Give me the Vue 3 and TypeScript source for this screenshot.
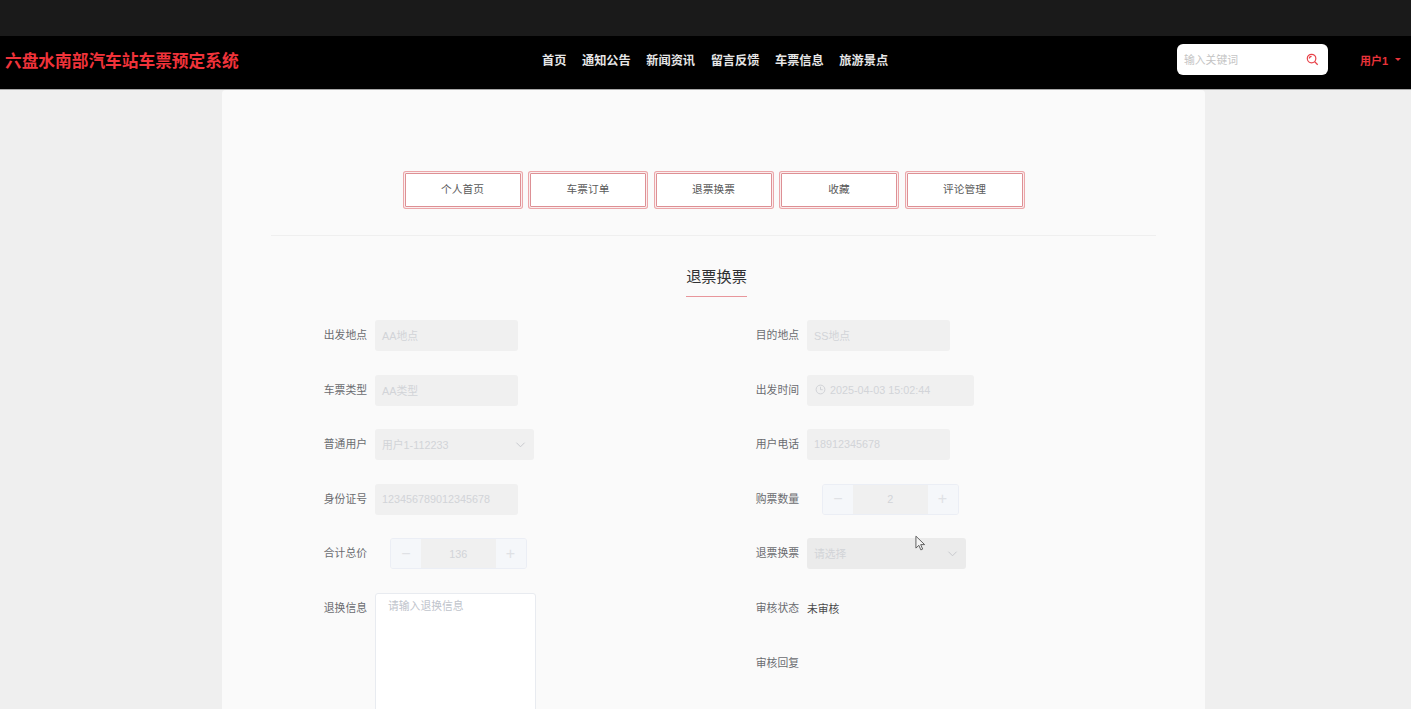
<template>
  <div class="page">
    <div class="top-strip"></div>
    <header class="nav-bar">
      <div class="site-title">六盘水南部汽车站车票预定系统</div>
      <nav class="nav-links">
        <a v-for="item in navItems" :key="item" class="nav-link">{{ item }}</a>
      </nav>
      <div class="search-box">
        <span class="search-placeholder">输入关键词</span>
        <svg class="search-icon" viewBox="0 0 14 14" width="13" height="13">
          <circle cx="6" cy="6" r="4.6" />
          <path d="M3.6 6a2.4 2.4 0 0 1 2.4-2.4" />
          <path d="M9.4 9.4 12.6 12.6" />
        </svg>
      </div>
      <div class="user-menu">
        <span>用户1</span>
        <i class="caret"></i>
      </div>
    </header>

    <main class="content">
      <section class="card">
        <div class="tabs">
          <button v-for="tab in tabs" :key="tab" class="tab-btn">{{ tab }}</button>
        </div>
        <div class="divider"></div>
        <div class="title-wrap">
          <h2 class="form-title">退票换票</h2>
        </div>

        <div class="form-grid">
          <div class="form-col">
            <div class="field">
              <label>出发地点</label>
              <div class="input is-disabled">AA地点</div>
            </div>
            <div class="field">
              <label>车票类型</label>
              <div class="input is-disabled">AA类型</div>
            </div>
            <div class="field">
              <label>普通用户</label>
              <div class="input select is-disabled">
                <span>用户1-112233</span>
                <svg class="chevron" viewBox="0 0 12 12" width="11" height="11"><path d="M1.5 4 6 8.5 10.5 4" /></svg>
              </div>
            </div>
            <div class="field">
              <label>身份证号</label>
              <div class="input is-disabled">123456789012345678</div>
            </div>
            <div class="field">
              <label>合计总价</label>
              <div class="stepper">
                <span class="step-btn">−</span>
                <span class="step-value">136</span>
                <span class="step-btn">+</span>
              </div>
            </div>
            <div class="field field-top">
              <label>退换信息</label>
              <div class="textarea">请输入退换信息</div>
            </div>
          </div>

          <div class="form-col">
            <div class="field">
              <label>目的地点</label>
              <div class="input is-disabled">SS地点</div>
            </div>
            <div class="field">
              <label>出发时间</label>
              <div class="input date is-disabled">
                <svg class="clock" viewBox="0 0 12 12" width="11" height="11">
                  <circle cx="6" cy="6" r="4.8" />
                  <path d="M6 3v3.2h2.4" />
                </svg>
                <span>2025-04-03 15:02:44</span>
              </div>
            </div>
            <div class="field">
              <label>用户电话</label>
              <div class="input is-disabled">18912345678</div>
            </div>
            <div class="field">
              <label>购票数量</label>
              <div class="stepper">
                <span class="step-btn">−</span>
                <span class="step-value">2</span>
                <span class="step-btn">+</span>
              </div>
            </div>
            <div class="field">
              <label>退票换票</label>
              <div class="input select refund is-disabled">
                <span>请选择</span>
                <svg class="chevron" viewBox="0 0 12 12" width="11" height="11"><path d="M1.5 4 6 8.5 10.5 4" /></svg>
              </div>
            </div>
            <div class="field">
              <label>审核状态</label>
              <div class="plain-value">未审核</div>
            </div>
            <div class="field">
              <label>审核回复</label>
            </div>
          </div>
        </div>
      </section>
    </main>

    <svg class="mouse-cursor" viewBox="0 0 12 18" width="11" height="17">
      <path d="M1 1v13l3.2-3 2.2 5 2-.9-2.2-4.900h4.300z" />
    </svg>
  </div>
</template>

<script setup lang="ts">
const navItems: string[] = ['首页', '通知公告', '新闻资讯', '留言反馈', '车票信息', '旅游景点']
const tabs: string[] = ['个人首页', '车票订单', '退票换票', '收藏', '评论管理']
</script>

<style>
html,
body {
  margin: 0;
  height: 100%;
  overflow: hidden;
}
</style>

<style scoped>
.page {
  position: relative;
  height: 709px;
  overflow: hidden;
  background: #efefef;
  font-family: "Liberation Sans", "Noto Sans CJK SC", sans-serif;
  font-size: 10.8px;
  color: #606266;
}

.top-strip {
  height: 36px;
  background: #1a1a1a;
}

.nav-bar {
  display: flex;
  align-items: center;
  height: 54px;
  padding-bottom: 6px;
  box-sizing: border-box;
  background: #000;
  border-bottom: 1px solid #a8a8a8;
}

.site-title {
  width: 542px;
  padding-left: 5px;
  box-sizing: border-box;
  font-size: 16.7px;
  font-weight: 700;
  color: #f0333a;
  white-space: nowrap;
}

.nav-links {
  display: flex;
  gap: 15.6px;
}

.nav-link {
  font-size: 12.2px;
  font-weight: 700;
  color: #e6e6e6;
}

.search-box {
  display: flex;
  align-items: center;
  justify-content: space-between;
  width: 151px;
  height: 31px;
  margin-left: auto;
  padding: 0 9px 0 7px;
  box-sizing: border-box;
  background: #fff;
  border-radius: 6px;
}

.search-placeholder {
  padding-bottom: 1px;
  color: #c4c4c4;
}

.search-icon {
  fill: none;
  stroke: #e8434a;
  stroke-width: 1.3;
}

.user-menu {
  display: flex;
  align-items: center;
  gap: 7px;
  width: 51px;
  margin-left: 32px;
  box-sizing: border-box;
  font-size: 11px;
  font-weight: 700;
  color: #e8333a;
}

.caret {
  width: 0;
  height: 0;
  border-left: 3px solid transparent;
  border-right: 3px solid transparent;
  border-top: 3px solid #e8333a;
}

.content {
  display: flex;
  justify-content: center;
  padding-left: 16px;
}

.card {
  width: 983px;
  height: 619px;
  padding: 81px 49px 0;
  box-sizing: border-box;
  background: #fafafa;
  border-radius: 4px 4px 0 0;
}

.tabs {
  display: flex;
  justify-content: center;
  gap: 9.5px;
}

.tab-btn {
  width: 116px;
  height: 34px;
  margin: 2px 0;
  padding: 0 0 4px;
  background: #fff;
  border: 1px solid #dd9095;
  box-shadow: 0 0 0 1px #fbeeee, 0 0 0 2px #eba6a9;
  border-radius: 1px;
  font-family: inherit;
  font-size: 10.7px;
  color: #5a5a5a;
}

.divider {
  height: 1px;
  margin-top: 26px;
  background: #efefef;
}

.title-wrap {
  display: flex;
  justify-content: center;
  margin-top: 29px;
  padding-left: 6px;
}

.form-title {
  margin: 0;
  padding-bottom: 8px;
  border-bottom: 1px solid #e8969b;
  font-size: 15.2px;
  font-weight: 400;
  line-height: 23px;
  color: #303133;
}

.form-grid {
  display: grid;
  grid-template-columns: 432px 432px;
  margin-top: 23px;
}

.form-col {
  display: flex;
  flex-direction: column;
  gap: 23.6px;
}

.field {
  display: flex;
  align-items: center;
  gap: 8px;
  min-height: 31px;
}

.field-top {
  align-items: flex-start;
}

.field label {
  width: 96px;
  flex-shrink: 0;
  line-height: 31px;
  text-align: right;
  color: #6a6c70;
}

.input {
  display: flex;
  align-items: center;
  width: 143px;
  height: 31px;
  padding: 0 7px 1px;
  box-sizing: border-box;
  border-radius: 3px;
  white-space: nowrap;
}

.is-disabled {
  background: #f0f0f0;
  color: #d2d4d8;
}

.select {
  justify-content: space-between;
  width: 159px;
  padding-right: 8px;
}

.refund {
  background: #ebebeb;
}

.date {
  gap: 4px;
  width: 167px;
  padding-left: 8px;
}

.chevron {
  fill: none;
  stroke: #c4c6ca;
  stroke-width: 1;
}

.clock {
  fill: none;
  stroke: #cdcfd3;
  stroke-width: 1;
  flex-shrink: 0;
}

.stepper {
  display: flex;
  width: 136.5px;
  height: 31px;
  margin-left: 15px;
  box-sizing: border-box;
  border: 1px solid #ebeef5;
  border-radius: 3px;
  overflow: hidden;
}

.step-btn {
  display: flex;
  align-items: center;
  justify-content: center;
  width: 30px;
  flex-shrink: 0;
  background: #f5f7fa;
  font-size: 16px;
  color: #dfe1e5;
}

.step-value {
  display: flex;
  flex: 1;
  align-items: center;
  justify-content: center;
  background: #f0f0f0;
  color: #d2d4d8;
}

.textarea {
  width: 161px;
  height: 200px;
  padding: 4px 12px;
  box-sizing: border-box;
  background: #fff;
  border: 1px solid #e8ebf0;
  border-radius: 3px;
  line-height: 16px;
  color: #c0c4cc;
}

.plain-value {
  color: #4a4a4a;
}

.mouse-cursor {
  position: absolute;
  left: 915px;
  top: 535px;
  fill: #f4f4f4;
  stroke: #555;
  stroke-width: 1;
}
</style>
